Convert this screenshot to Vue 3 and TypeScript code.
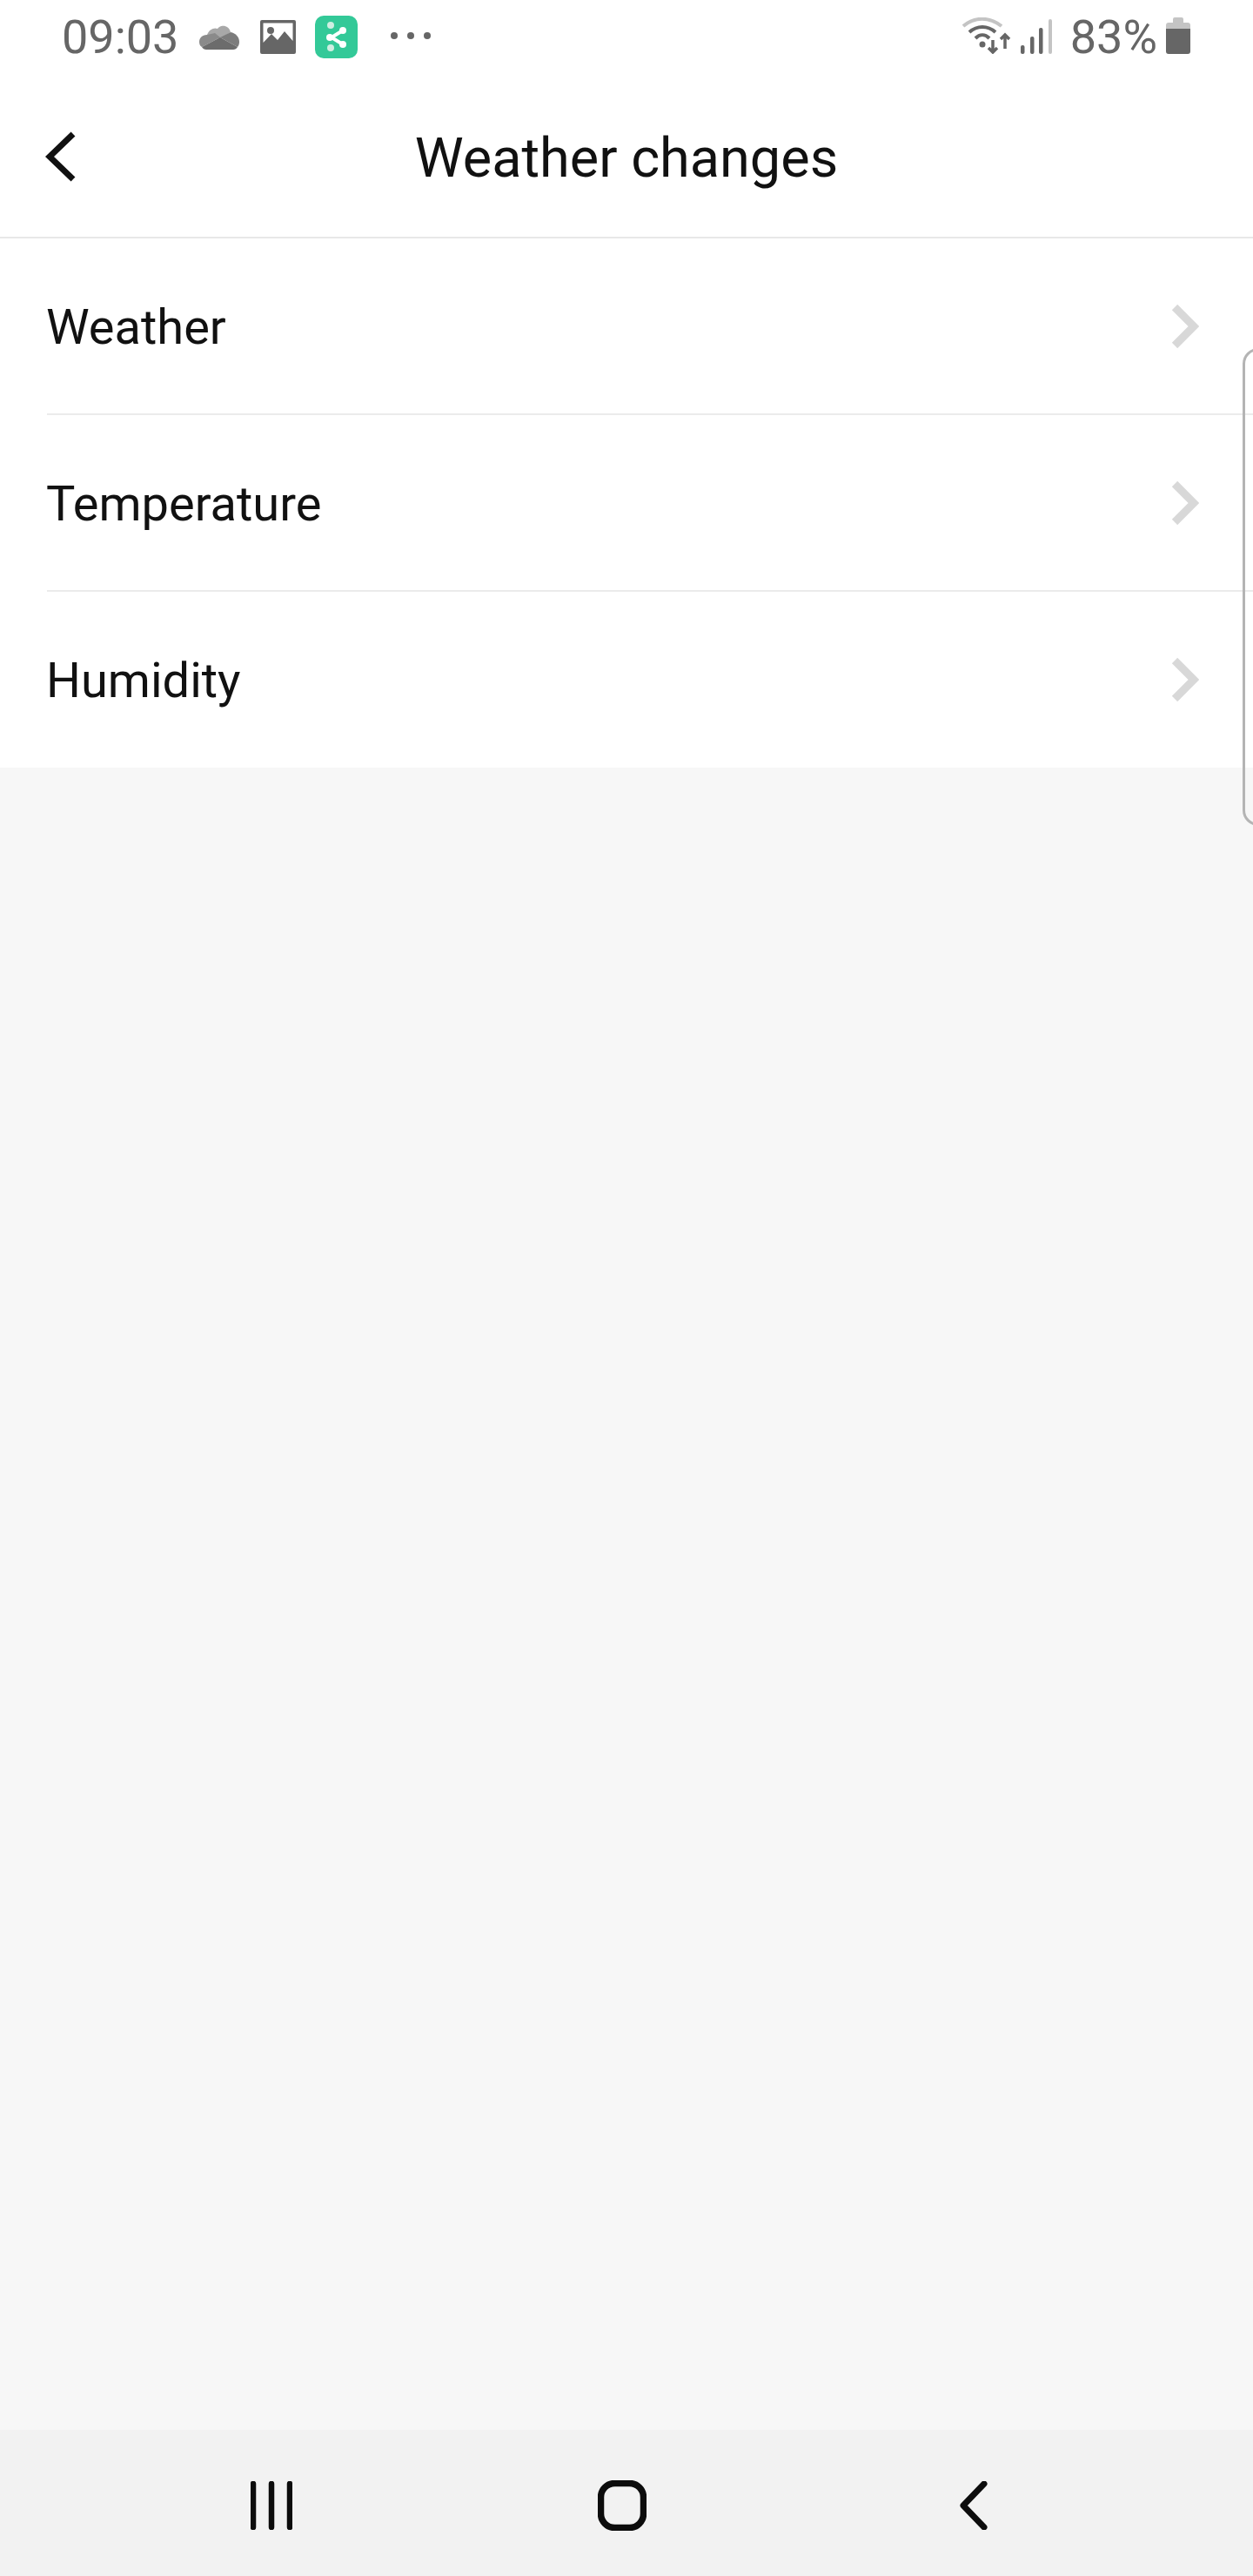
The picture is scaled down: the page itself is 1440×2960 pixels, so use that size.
<script setup lang="ts">
const rows: string[] = ['Weather', 'Temperature', 'Humidity']
</script>

<template>
  <div class="screen">
    <header class="top">
      <div class="status">
        <span class="time">09:03</span>
        <svg class="cloud" width="46" height="30" viewBox="0 0 46 30">
          <path d="M9 12 C11 6 17 3 21 5 C24 0 34 0 36 9 L24 16 Z" fill="#a8a8a8" />
          <path d="M9 12 C3 12 0 16 0 20 C0 23 1 25 3 26 L24 15 L18 10 Z" fill="#8a8a8a" />
          <path d="M36 9 C42 10 46 15 46 20 C46 23 45 25 44 26 L24 15 Z" fill="#7c7c7c" />
          <path d="M3 26 L24 15 L44 26 C43 28 41 29 39 29 L8 29 C6 29 4 28 3 26 Z" fill="#6c6c6c" />
        </svg>
        <svg class="image" width="41" height="39" viewBox="0 0 41 39">
          <path fill-rule="evenodd" fill="#666" d="M2 0 H39 A2 2 0 0 1 41 2 V37 A2 2 0 0 1 39 39 H2 A2 2 0 0 1 0 37 V2 A2 2 0 0 1 2 0 Z M3.500 3.500 V26 L13 16 L20 23 L28 13 L37.500 24 V3.500 Z" />
          <circle cx="12" cy="12" r="4" fill="#666" />
        </svg>
        <svg class="app" width="49" height="49" viewBox="0 0 49 49">
          <rect width="49" height="49" rx="10" fill="#33c998" />
          <path d="M32 17 L19 25 L32 33" fill="none" stroke="#fff" stroke-width="4" />
          <circle cx="18" cy="11" r="4" fill="#cfeee2" />
          <circle cx="18" cy="37" r="4" fill="#cfeee2" />
          <circle cx="32" cy="17" r="4" fill="#fff" />
          <circle cx="32" cy="33" r="4" fill="#fff" />
          <circle cx="17" cy="25" r="4" fill="#fff" />
        </svg>
        <svg class="dots" width="50" height="8" viewBox="0 0 50 8">
          <circle cx="4" cy="4" r="4" fill="#666" />
          <circle cx="23" cy="4" r="4" fill="#666" />
          <circle cx="42" cy="4" r="4" fill="#666" />
        </svg>
        <span class="spacer"></span>
        <svg class="wifi" width="58" height="42" viewBox="0 0 58 42">
          <path d="M2 10 C15 -1 32 -1 46 10" fill="none" stroke="#c4c4c4" stroke-width="4" />
          <path d="M9 17 C18 9 30 9 39 17" fill="none" stroke="#666" stroke-width="4" />
          <path d="M16 24 C21 19 27 19 32 24" fill="none" stroke="#666" stroke-width="4" />
          <circle cx="24" cy="31" r="3.500" fill="#666" />
          <path d="M36 26 V40 M31 35 L36 40 L41 35" fill="none" stroke="#666" stroke-width="3.500" />
          <path d="M50 36 V20 M45 25 L50 20 L55 25" fill="none" stroke="#666" stroke-width="3.500" />
        </svg>
        <svg class="signal" width="36" height="40" viewBox="0 0 36 40">
          <rect x="0" y="30" width="4.500" height="10" rx="2" fill="#666" />
          <rect x="11" y="20" width="4.500" height="20" rx="2" fill="#666" />
          <rect x="21" y="10" width="4.500" height="30" rx="2" fill="#666" />
          <rect x="32" y="0" width="4" height="40" rx="2" fill="#c4c4c4" />
        </svg>
        <span class="pct">83%</span>
        <svg class="battery" width="28" height="42" viewBox="0 0 28 42">
          <path d="M8 2 A2 2 0 0 1 10 0 H18 A2 2 0 0 1 20 2 V6 H25 A3 3 0 0 1 28 9 V14 H0 V9 A3 3 0 0 1 3 6 H8 Z" fill="#c4c4c4" />
          <path d="M0 13 H28 V39 A3 3 0 0 1 25 42 H3 A3 3 0 0 1 0 39 Z" fill="#666" />
        </svg>
      </div>
      <div class="toolbar">
        <svg class="back" width="36" height="60" viewBox="0 0 36 60">
          <path d="M32 4 L5 30 L32 56" fill="none" stroke="#111" stroke-width="7" />
        </svg>
        <h1 class="title">Weather changes</h1>
      </div>
    </header>

    <main class="body">
      <ul class="list">
        <li v-for="r in rows" :key="r" class="row">
          <span class="label">{{ r }}</span>
          <svg class="chev" width="32" height="50" viewBox="0 0 32 50">
            <path d="M4 3 L26 25 L4 47" fill="none" stroke="#d8d8d8" stroke-width="9" />
          </svg>
        </li>
      </ul>
      <div class="edge"></div>
    </main>

    <nav class="nav">
      <svg width="48" height="56" viewBox="0 0 48 56">
        <g stroke="#0c0c0c" stroke-width="6.500" stroke-linecap="round">
          <path d="M3 3 V53" /><path d="M24 3 V53" /><path d="M45 3 V53" />
        </g>
      </svg>
      <svg class="home" width="56" height="58" viewBox="0 0 56 58">
        <rect x="3.500" y="3.500" width="49" height="51" rx="16" fill="none" stroke="#0c0c0c" stroke-width="7.500" />
      </svg>
      <svg class="prev" width="32" height="56" viewBox="0 0 32 56">
        <path d="M28 3 L4 28 L28 53" fill="none" stroke="#0c0c0c" stroke-width="7" stroke-linecap="round" stroke-linejoin="round" />
      </svg>
    </nav>
  </div>
</template>

<style>
html, body { margin: 0; padding: 0; background: #fff; }
</style>

<style scoped>
.screen {
  width: 1440px;
  height: 2960px;
  display: flex;
  flex-direction: column;
  background: #f7f7f7;
  font-family: Roboto, "Liberation Sans", sans-serif;
  overflow: hidden;
}
.top { background: #fff; border-bottom: 2px solid #e8e8e8; }
.status {
  height: 88px;
  display: flex;
  align-items: flex-start;
  padding: 0 72px 0 71px;
  box-sizing: border-box;
}
.time, .pct {
  font-size: 54px;
  line-height: 60px;
  margin-top: 13px;
  color: #666;
}
.cloud { margin: 28px 0 0 24px; }
.image { margin: 23px 0 0 24px; }
.app { margin: 18px 0 0 22px; }
.dots { margin: 37px 0 0 38px; }
.spacer { flex: 1; }
.wifi { margin: 20px 0 0 0; }
.signal { margin: 22px 0 0 10px; }
.pct { margin-left: 21px; }
.battery { margin: 20px 0 0 10px; }
.toolbar {
  height: 184px;
  display: flex;
  align-items: center;
  position: relative;
  padding-left: 52px;
}
.title {
  position: absolute;
  left: 0;
  right: 0;
  margin: 2px 0 0;
  text-align: center;
  font-size: 63px;
  font-weight: 400;
  color: #111;
}
.body { flex: 1; position: relative; }
.list { margin: 0; padding: 0; list-style: none; background: #fff; }
.row {
  height: 203px;
  margin-left: 54px;
  padding-right: 62px;
  display: flex;
  align-items: center;
  justify-content: space-between;
  border-bottom: 2px solid #ebebeb;
  box-sizing: border-box;
}
.row:last-child { border-bottom: none; height: 202px; }
.label { font-size: 56px; color: #111; margin: 2px 0 0 -1px; }
.edge {
  position: absolute;
  right: -24px;
  top: 126px;
  width: 36px;
  height: 549px;
  border: 3px solid #b4b4b4;
  border-radius: 20px;
  box-sizing: border-box;
}
.nav {
  height: 168px;
  padding: 6px 0 0 288px;
  box-sizing: border-box;
  background: #f2f2f2;
  display: flex;
  align-items: center;
}
.home { margin-left: 351px; }
.prev { margin-left: 360px; }
</style>
